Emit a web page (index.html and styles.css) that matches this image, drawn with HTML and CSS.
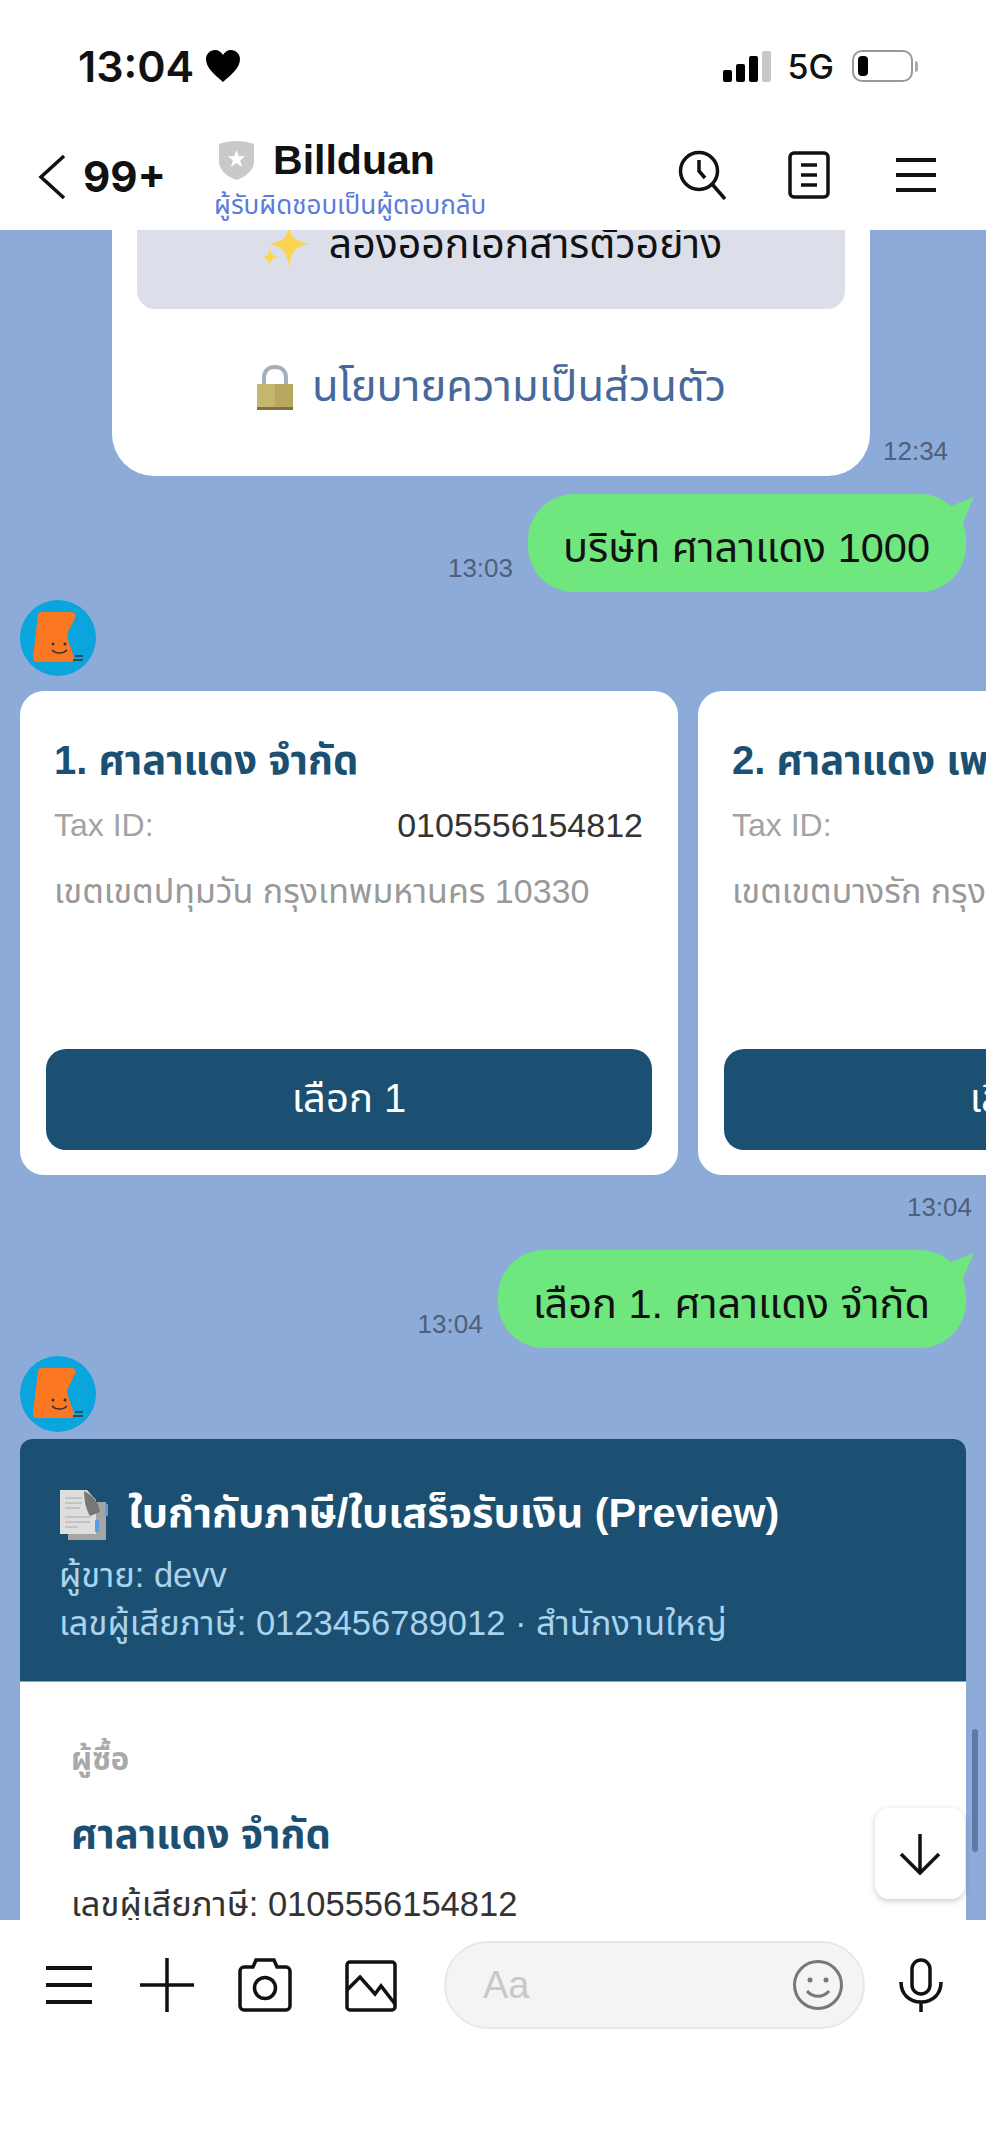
FILE: index.html
```html
<!DOCTYPE html>
<html lang="th">
<head>
    <meta charset="UTF-8">
    <meta name="viewport" content="width=device-width, initial-scale=1.0">
    <title>Billduan</title>
    <link rel="stylesheet" href="styles.css">
</head>
<body>
    <div class="status-bar">
        <div class="clock">13:04
            <svg class="heart" viewBox="0 0 34 32"><path d="M17 32C9 25 0 18 0 9C0 4 4 0 9 0C12.500 0 15.500 2 17 5C18.500 2 21.500 0 25 0C30 0 34 4 34 9C34 18 25 25 17 32Z"/></svg>
        </div>
        <div class="status-right">
            <div class="signal"><i class="b1"></i><i class="b2"></i><i class="b3"></i><i class="b4"></i></div>
            <span class="network">5G</span>
            <div class="battery"><i></i></div>
            <div class="battery-nub"></div>
        </div>
    </div>

    <div class="nav-bar">
        <svg class="back" viewBox="0 0 28 46"><path d="M26 2L3 23L26 44"/></svg>
        <span class="unread">99+</span>
        <div class="chat-title">
            <div class="name-row">
                <svg class="shield" viewBox="0 0 36 40"><path fill="#c9c9c9" d="M18 0C24 0 30 1 36 3V21C36 30 27 37 18 40C9 37 0 30 0 21V3C6 1 12 0 18 0Z"/><path fill="#fff" d="M18 9L20.500 15.500H27L21.800 19.700L23.700 26.500L18 22.500L12.300 26.500L14.200 19.700L9 15.500H15.500Z"/></svg>
                <span class="name">Billduan</span>
            </div>
            <div class="sub-name">ผู้รับผิดชอบเป็นผู้ตอบกลับ</div>
        </div>
        <div class="nav-icons">
            <svg class="nav-search" viewBox="0 0 50 50"><circle cx="21" cy="21" r="18.500"/><path d="M21 10V21L27 28M34 34L47 49"/></svg>
            <svg class="nav-list" viewBox="0 0 42 48"><rect x="2" y="2" width="38" height="44" rx="4"/><path d="M13 14H29M13 24H29M13 34H29"/></svg>
            <svg class="nav-menu" viewBox="0 0 40 36"><path d="M0 3H40M0 18H40M0 33H40"/></svg>
        </div>
    </div>

    <div class="chat">
        <div class="row-promo">
            <div class="promo-card">
                <div class="promo-box">
                    <svg class="sparkles" viewBox="0 0 50 50"><path d="M29 8C31 20 36 24 50 26C36 28 31 33 29 50C27 33 22 28 8 26C22 24 27 20 29 8Z"/><path d="M10 30C11 36 13 38 18 39C13 40 11 42 10 48C9 42 7 40 2 39C7 38 9 36 10 30Z"/><path d="M13 0C14 4 16 5 20 6C16 7 14 9 13 13C12 9 10 7 6 6C10 5 12 4 13 0Z"/></svg>
                    <span>ลองออกเอกสารตัวอย่าง</span>
                </div>
                <div class="promo-link">
                    <svg class="lock" viewBox="0 0 38 46"><path d="M8 22V13C8 6 12 2 19 2C26 2 30 6 30 13V22" fill="none" stroke="#9fb0bf" stroke-width="4"/><rect x="1" y="19" width="36" height="26" rx="1" fill="#c5b56d"/><rect x="19" y="19" width="18" height="26" fill="#b8a85f"/><rect x="1" y="42" width="36" height="3" fill="#7f7240"/></svg>
                    <span>นโยบายความเป็นส่วนตัว</span>
                </div>
            </div>
            <span class="time">12:34</span>
        </div>

        <div class="row-sent">
            <span class="time">13:03</span>
            <div class="bubble">บริษัท ศาลาแดง 1000</div>
        </div>

        <svg class="avatar" viewBox="0 0 76 76"><circle cx="38" cy="38" r="38" fill="#0aa5dc"/><path fill="#fb7722" d="M22 12H50C55 12 57 14 55 18L48 32C47 34 47 36 48 40L54 57C55 60 53 62 50 62H17C14 62 13 60 13 57L18 15C18 13 20 12 22 12Z"/><circle cx="33" cy="44" r="1.500" fill="#333"/><circle cx="45" cy="44" r="1.500" fill="#333"/><path d="M32 50C36 54 43 54 47 50" fill="none" stroke="#333" stroke-width="1.500"/><path d="M55 56H63M53 60H63" stroke="#333" stroke-width="1.500"/></svg>

        <div class="carousel">
            <div class="company-card">
                <div class="company-name">1. ศาลาแดง จำกัด</div>
                <div class="tax-row"><span class="tax-label">Tax ID:</span><span class="tax-value">0105556154812</span></div>
                <div class="address">เขตเขตปทุมวัน กรุงเทพมหานคร 10330</div>
                <div class="pick-btn">เลือก 1</div>
            </div>
            <div class="company-card">
                <div class="company-name">2. ศาลาแดง เพ</div>
                <div class="tax-row"><span class="tax-label">Tax ID:</span></div>
                <div class="address">เขตเขตบางรัก กรุงเ</div>
                <div class="pick-btn">เลือก 2</div>
            </div>
        </div>

        <div class="carousel-time"><span class="time">13:04</span></div>

        <div class="row-sent">
            <span class="time">13:04</span>
            <div class="bubble">เลือก 1. ศาลาแดง จำกัด</div>
        </div>

        <svg class="avatar" viewBox="0 0 76 76"><circle cx="38" cy="38" r="38" fill="#0aa5dc"/><path fill="#fb7722" d="M22 12H50C55 12 57 14 55 18L48 32C47 34 47 36 48 40L54 57C55 60 53 62 50 62H17C14 62 13 60 13 57L18 15C18 13 20 12 22 12Z"/><circle cx="33" cy="44" r="1.500" fill="#333"/><circle cx="45" cy="44" r="1.500" fill="#333"/><path d="M32 50C36 54 43 54 47 50" fill="none" stroke="#333" stroke-width="1.500"/><path d="M55 56H63M53 60H63" stroke="#333" stroke-width="1.500"/></svg>

        <div class="invoice">
            <div class="invoice-head">
                <div class="invoice-title">
                    <svg class="doc" viewBox="0 0 48 50"><rect x="8" y="12" width="38" height="38" fill="#a5a5a5"/><path d="M0 0H27L36 10V44H0Z" fill="#dedede"/><path d="M5 8H22M5 13H22M5 18H20M5 27H30M5 32H30M5 37H18" stroke="#a8a8a8" stroke-width="1.200"/><path d="M24 1C28 3 38 8 40 22L30 26C26 20 24 10 24 1Z" fill="#777"/><rect x="45" y="14" width="3" height="12" rx="1" fill="#5d9be8"/><rect x="35" y="30" width="4" height="12" rx="1" fill="#5d9be8"/></svg>
                    <span>ใบกำกับภาษี/ใบเสร็จรับเงิน (Preview)</span>
                </div>
                <div class="invoice-meta">ผู้ขาย: devv</div>
                <div class="invoice-meta">เลขผู้เสียภาษี: 0123456789012 · สำนักงานใหญ่</div>
            </div>
            <div class="invoice-body">
                <div class="buyer-label">ผู้ซื้อ</div>
                <div class="buyer-name">ศาลาแดง จำกัด</div>
                <div class="buyer-tax">เลขผู้เสียภาษี: 0105556154812</div>
            </div>
        </div>

        <div class="scroll-thumb"></div>
        <div class="scroll-down">
            <svg viewBox="0 0 42 42"><path d="M21 1V40M2 21L21 40L40 21"/></svg>
        </div>
    </div>

    <div class="composer">
        <svg class="tool tool-menu" viewBox="0 0 46 38"><path d="M0 2H46M0 19H46M0 36H46"/></svg>
        <svg class="tool tool-plus" viewBox="0 0 54 54"><path d="M27 0V54M0 27H54"/></svg>
        <svg class="tool tool-camera" viewBox="0 0 54 54"><path d="M6 9H15L18 2H36L39 9H48C50 9 52 11 52 13V48C52 50 50 52 48 52H6C4 52 2 50 2 48V13C2 11 4 9 6 9Z"/><circle cx="27" cy="30" r="10.500"/></svg>
        <svg class="tool tool-image" viewBox="0 0 52 52"><rect x="2" y="2" width="48" height="48" rx="3"/><path d="M2 30L15 17L30 34L36 26L50 44"/></svg>
        <div class="input-box">
            <span class="placeholder">Aa</span>
            <svg class="smile" viewBox="0 0 50 50"><circle cx="25" cy="25" r="23.500"/><circle cx="17" cy="20" r="2.500" class="dot"/><circle cx="33" cy="20" r="2.500" class="dot"/><path d="M14 31C20 38 30 38 36 31"/></svg>
        </div>
        <svg class="tool tool-mic" viewBox="0 0 44 54"><rect x="13" y="2" width="18" height="34" rx="9"/><path d="M2 24C2 36 10 44 22 44C34 44 42 36 42 24M22 44V54"/></svg>
    </div>
</body>
</html>
```

FILE: styles.css
```css
* {
    box-sizing: border-box;
}
html, body {
    margin: 0;
    height: 2134px;
    overflow: hidden;
}
body {
    display: flex;
    flex-direction: column;
    background: #fff;
    color: #111;
    font-family: "Liberation Sans", "Noto Sans Thai", "Noto Sans", sans-serif;
}
svg {
    display: block;
    flex: none;
}

/* status bar */
.status-bar {
    height: 130px;
    padding: 46px 68px 0 78px;
    display: flex;
    justify-content: space-between;
    align-items: flex-start;
}
.clock {
    display: flex;
    align-items: center;
    gap: 12px;
    font-family: Inter, sans-serif;
    font-size: 43px;
    font-weight: 600;
    line-height: 40px;
}
.heart {
    width: 34px;
    height: 32px;
    fill: #000;
}
.status-right {
    display: flex;
    align-items: center;
    height: 40px;
}
.signal {
    display: flex;
    align-items: flex-end;
    gap: 4px;
    height: 31px;
}
.signal i {
    width: 9px;
    background: #000;
    border-radius: 2px;
}
.signal .b1 { height: 12px; }
.signal .b2 { height: 18px; }
.signal .b3 { height: 26px; }
.signal .b4 { height: 31px; background: #c8c8c8; }
.network {
    margin-left: 17px;
    font-family: Inter, sans-serif;
    font-size: 34px;
    font-weight: 500;
}
.battery {
    margin-left: 18px;
    width: 61px;
    height: 32px;
    border: 2.500px solid #999;
    border-radius: 10px;
    padding: 4px;
}
.battery i {
    display: block;
    width: 10px;
    height: 100%;
    background: #000;
    border-radius: 4px;
}
.battery-nub {
    width: 3px;
    height: 11px;
    margin-left: 2px;
    background: #aaa;
    border-radius: 0 3px 3px 0;
}

/* nav bar */
.nav-bar {
    height: 100px;
    padding-left: 38px;
    display: flex;
}
.back {
    width: 28px;
    height: 46px;
    margin-top: 24px;
    fill: none;
    stroke: #111;
    stroke-width: 3.500;
}
.unread {
    margin: 24px 0 0 17px;
    font-family: Inter, sans-serif;
    font-size: 42px;
    font-weight: 700;
    line-height: 46px;
}
.chat-title {
    margin-left: 48px;
}
.name-row {
    display: flex;
    align-items: center;
    height: 46px;
    margin: 7px 0 0 5px;
    gap: 19px;
}
.shield {
    width: 35px;
    height: 39px;
}
.name {
    font-size: 41px;
    font-weight: 700;
    line-height: 46px;
}
.sub-name {
    margin-top: 3px;
    font-size: 26px;
    line-height: 38px;
    color: #5b7bdc;
    white-space: nowrap;
}
.nav-icons {
    margin-left: auto;
    display: flex;
    align-items: center;
    height: 100px;
    padding-bottom: 10px;
}
.nav-icons svg {
    fill: none;
    stroke: #111;
}
.nav-search {
    width: 50px;
    height: 50px;
    stroke-width: 3.500;
}
.nav-list {
    width: 42px;
    height: 48px;
    margin-left: 60px;
    stroke-width: 3.500;
}
.nav-menu {
    width: 40px;
    height: 36px;
    margin: 0 50px 0 66px;
    stroke-width: 4;
}

/* chat */
.chat {
    position: relative;
    flex: 1;
    min-height: 0;
    overflow: hidden;
    padding: 0 20px;
    background: #8cabd9;
}
.time {
    display: block;
    font-size: 26px;
    line-height: 24px;
    color: #4f5f7a;
    white-space: nowrap;
}
.row-promo {
    display: flex;
    align-items: flex-end;
    gap: 13px;
    margin-top: -66px;
    padding-left: 92px;
}
.row-promo .time {
    margin-bottom: 13px;
}
.promo-card {
    width: 758px;
    height: 312px;
    padding: 16px 25px 0;
    background: #fff;
    border-radius: 0 0 42px 42px;
}
.promo-box {
    height: 129px;
    padding-top: 40px;
    border-radius: 18px;
    background: #dcdfe9;
    display: flex;
    justify-content: center;
    align-items: flex-start;
    gap: 19px;
    font-size: 41px;
    line-height: 48px;
}
.sparkles {
    width: 50px;
    height: 50px;
    fill: #fad552;
    margin-top: -2px;
}
.promo-link {
    height: 158px;
    display: flex;
    justify-content: center;
    align-items: center;
    gap: 18px;
    font-size: 43.500px;
    color: #47689b;
}
.lock {
    width: 38px;
    height: 46px;
}
.row-sent {
    display: flex;
    justify-content: flex-end;
    align-items: flex-end;
    gap: 15px;
    margin-top: 18px;
}
.row-sent .time {
    margin-bottom: 12px;
}
.bubble {
    position: relative;
    height: 98px;
    padding: 12px 36px 0 35px;
    display: flex;
    align-items: center;
    border-radius: 46px;
    background: #70e67f;
    font-size: 41.500px;
    color: #111;
    white-space: nowrap;
}
.bubble::after {
    content: "";
    position: absolute;
    top: 3px;
    right: -8px;
    width: 28px;
    height: 26px;
    background: #70e67f;
    clip-path: polygon(0 35%, 18% 35%, 100% 0, 60% 100%, 0 100%);
}
.avatar {
    width: 76px;
    height: 76px;
    margin-top: 8px;
}

/* company cards */
.carousel {
    display: flex;
    gap: 20px;
    width: 1400px;
    margin-top: 15px;
}
.company-card {
    width: 658px;
    height: 484px;
    flex: none;
    padding: 46px 26px 25px;
    border-radius: 24px;
    background: #fff;
    display: flex;
    flex-direction: column;
    overflow: hidden;
}
.company-name {
    padding: 0 8px;
    font-size: 40px;
    font-weight: 700;
    line-height: 46px;
    color: #1b5072;
    white-space: nowrap;
}
.tax-row {
    display: flex;
    justify-content: space-between;
    margin-top: 21px;
    padding: 0 9px 0 8px;
    font-size: 34px;
    line-height: 42px;
}
.tax-label {
    font-size: 32px;
    color: #a3a3a3;
}
.tax-value {
    color: #333;
}
.address {
    margin-top: 23px;
    padding: 0 8px;
    font-size: 34px;
    line-height: 44px;
    color: #999;
    white-space: nowrap;
}
.pick-btn {
    margin-top: auto;
    height: 101px;
    flex: none;
    border-radius: 20px;
    background: #1b5072;
    color: #fff;
    font-size: 40px;
    display: flex;
    align-items: center;
    justify-content: center;
}
.carousel-time {
    display: flex;
    justify-content: flex-end;
    margin: 20px -6px 0 0;
    height: 27px;
}
.carousel-time + .row-sent {
    margin-top: 28px;
}

/* invoice */
.invoice {
    margin-top: 7px;
    border-radius: 12px 12px 0 0;
    overflow: hidden;
    background: #fff;
}
.invoice-head {
    height: 243px;
    padding: 46px 39px 0;
    background: #1b5072;
    border-bottom: 1px solid #7fa6c4;
    color: #a9d3ee;
}
.invoice-title {
    display: flex;
    align-items: center;
    gap: 19px;
    height: 56px;
    padding-top: 3px;
    font-size: 41.500px;
    font-weight: 700;
    color: #fff;
    white-space: nowrap;
}
.doc {
    width: 50px;
    height: 50px;
}
.invoice-meta {
    font-size: 34.500px;
    line-height: 48px;
    white-space: nowrap;
}
.invoice-title + .invoice-meta {
    margin-top: 10px;
}
.invoice-body {
    padding: 56px 51px 0;
}
.buyer-label {
    font-size: 31px;
    font-weight: 700;
    line-height: 44px;
    color: #a9a9a9;
}
.buyer-name {
    margin-top: 29px;
    font-size: 40px;
    font-weight: 700;
    line-height: 46px;
    color: #1b5072;
}
.buyer-tax {
    margin-top: 25px;
    font-size: 34.500px;
    line-height: 44px;
    color: #333;
}
.scroll-thumb {
    position: absolute;
    top: 1499px;
    right: 8px;
    width: 6px;
    height: 123px;
    border-radius: 3px;
    background: #5d7aa5;
}
.scroll-down {
    position: absolute;
    top: 1578px;
    right: 21px;
    width: 90px;
    height: 91px;
    border-radius: 14px;
    background: #fff;
    box-shadow: 0 2px 6px rgba(0, 0, 0, 0.2);
    display: flex;
    align-items: center;
    justify-content: center;
}
.scroll-down svg {
    width: 42px;
    height: 42px;
    fill: none;
    stroke: #111;
    stroke-width: 3.500;
}

/* composer */
.composer {
    height: 214px;
    flex: none;
    padding: 21px 0 0 46px;
    display: flex;
    align-items: flex-start;
    background: #fff;
}
.tool {
    fill: none;
    stroke: #111;
    stroke-width: 3.500;
}
.tool-menu { width: 46px; height: 38px; margin-top: 25px; stroke-width: 4; }
.tool-plus { width: 54px; height: 54px; margin: 17px 0 0 48px; }
.tool-camera { width: 54px; height: 54px; margin: 17px 0 0 44px; }
.tool-image { width: 52px; height: 52px; margin: 19px 0 0 53px; }
.input-box {
    width: 421px;
    height: 88px;
    margin-left: 47px;
    padding: 0 20px 0 37px;
    border: 2px solid #e8e8e8;
    border-radius: 44px;
    background: #f4f4f4;
    display: flex;
    align-items: center;
    justify-content: space-between;
}
.placeholder {
    font-size: 38px;
    color: #c8c8c8;
}
.smile {
    width: 50px;
    height: 50px;
    fill: none;
    stroke: #777;
    stroke-width: 3;
}
.smile .dot {
    fill: #777;
    stroke: none;
}
.tool-mic { width: 44px; height: 54px; margin: 17px 0 0 34px; }
```
